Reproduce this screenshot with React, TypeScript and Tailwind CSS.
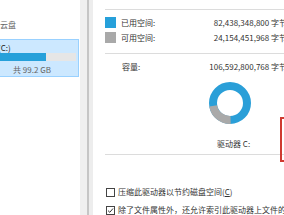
function Checkbox({ checked }: { checked?: boolean }) {
  return (
    <div className="w-[9px] h-[9px] shrink-0 border border-[#444] bg-white flex items-center justify-center">
      {checked && (
        <svg width="7" height="7" viewBox="0 0 7 7">
          <path d="M1 3.6 L2.8 5.3 L6 1.5" fill="none" stroke="#333" strokeWidth="1" />
        </svg>
      )}
    </div>
  );
}

function Donut() {
  const c = 2 * Math.PI * 17;
  return (
    <svg width="42" height="42" viewBox="0 0 42 42">
      <circle cx="21" cy="21" r="17" fill="none" stroke="#2a9fd8" strokeWidth="8" />
      <circle
        cx="21" cy="21" r="17" fill="none" stroke="#a9a9a9" strokeWidth="8"
        strokeDasharray={`${c * 0.227} ${c}`}
        transform="rotate(88 21 21)"
      />
    </svg>
  );
}

export default function App() {
  return (
    <div className="relative flex w-[284px] h-[215px] overflow-hidden bg-white font-['Noto_Sans_CJK_SC',sans-serif] text-[8px] leading-[10px] text-[#333]">
      {/* nav pane */}
      <div className="w-[80px] shrink-0 pt-[20px]">
        <div className="text-[#666]">云盘</div>
        <div className="mt-[9px] w-[79px] border-y border-r border-[#99d1ff] bg-[#cce8ff] pt-[3px] pb-[1px]">
          <div className="-ml-[2px] text-[#222]">(C:)</div>
          <div className="flex w-[76px] h-[8px] bg-[#e6e6e6]">
            <div className="w-[46px] bg-[#26a0da]" />
          </div>
          <div className="mt-[4px] pl-[13px] text-[#666]">共 99.2 GB</div>
        </div>
      </div>

      {/* window edge */}
      <div className="w-[7px] shrink-0 bg-[#f0f0f0]" />
      <div className="w-[2px] shrink-0 bg-[#c6c6c6]" />
      <div className="w-[4px] shrink-0 bg-[#ededed]" />

      {/* properties dialog */}
      <div className="flex-1 overflow-hidden pl-[12px] pt-[9px]">
        <div className="w-[182px]">
          <div className="h-px bg-[#dcdcdc]" />

          <div className="mt-[7px] flex h-[11px] items-center">
            <div className="w-[11px] h-[11px] bg-[#26a0da]" />
            <span className="ml-[5px]">已用空间:</span>
            <span className="ml-auto whitespace-nowrap">82,438,348,800 字节</span>
          </div>
          <div className="mt-[4px] flex h-[11px] items-center">
            <div className="w-[11px] h-[11px] bg-[#a9a9a9]" />
            <span className="ml-[5px]">可用空间:</span>
            <span className="ml-auto whitespace-nowrap">24,154,451,968 字节</span>
          </div>

          <div className="mt-[10px] h-px bg-[#dcdcdc]" />

          <div className="mt-[8px] flex h-[10px] items-center pl-[17px]">
            <span>容量:</span>
            <span className="ml-auto whitespace-nowrap">106,592,800,768 字节</span>
          </div>

          <div className="mt-[10px] ml-[104px]">
            <Donut />
          </div>

          <div className="mt-[15px] ml-[112px]">驱动器 C:</div>

          <div className="mt-[5px] h-px bg-[#dcdcdc]" />

          <div className="mt-[32px] flex h-[10px] items-center pl-px">
            <Checkbox />
            <span className="ml-[3px] whitespace-nowrap">
              压缩此驱动器以节约磁盘空间(<span className="underline">C</span>)
            </span>
          </div>
          <div className="mt-[8px] flex h-[10px] items-center pl-px">
            <Checkbox checked />
            <span className="ml-[3px] whitespace-nowrap">除了文件属性外，还允许索引此驱动器上文件的内容(I)</span>
          </div>
        </div>
      </div>

      {/* annotation */}
      <div className="absolute left-[280px] top-[117px] w-[20px] h-[45px] border-2 border-[#cf3a30]" />
    </div>
  );
}
